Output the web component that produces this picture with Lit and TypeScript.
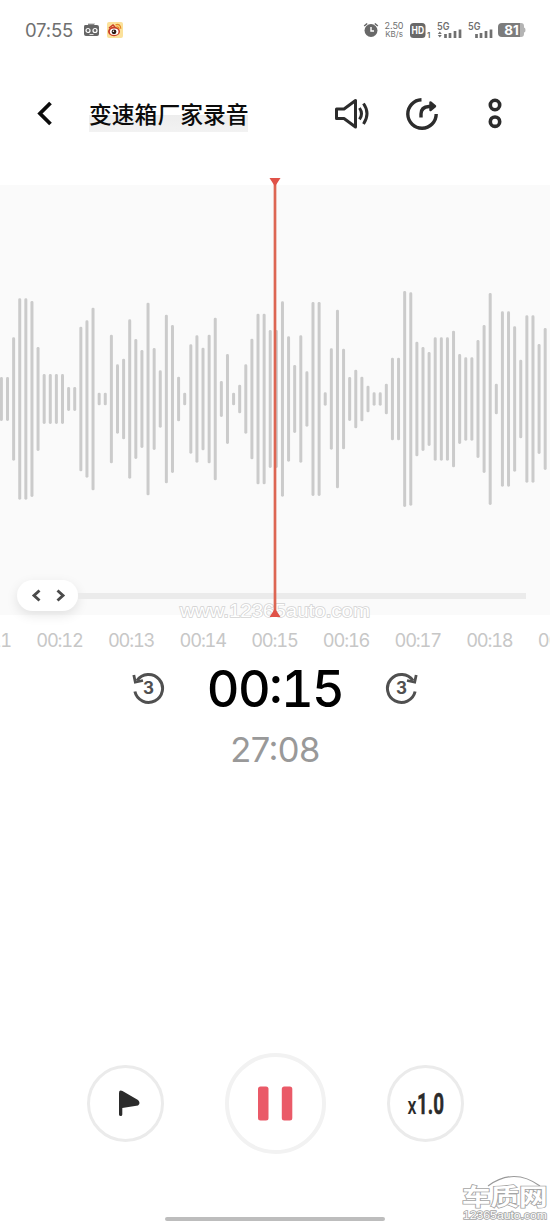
import { LitElement, html, svg, css } from "lit";
import { customElement } from "lit/decorators.js";

// Half-heights of the waveform bars, in thirds of a pixel.
const LEVELS = [
  66, 66, 185, 302, 302, 294, 156, 75, 75, 75, 75, 36, 36, 217, 236, 274, 19, 19, 193, 104,
  121, 239, 180, 147, 289, 153, 86, 253, 222, 67, 19, 164, 191, 154, 193, 244, 54, 135, 19, 43,
  104, 181, 256, 256, 207, 207, 293, 188, 102, 191, 83, 291, 291, 20, 152, 268, 151, 66, 88, 67,
  40, 20, 20, 46, 124, 124, 324, 320, 172, 156, 141, 185, 185, 185, 205, 135, 125, 125, 177, 222,
  318, 46, 263, 263, 218, 118, 251, 251, 165, 213,
];
const TICKS = ["00:11", "00:12", "00:13", "00:14", "00:15", "00:16", "00:17", "00:18", "00:19"];

@customElement("status-bar")
class StatusBar extends LitElement {
  static styles = css`
    :host { display: flex; height: 60px; box-sizing: border-box; padding: 0 24px 0 25px; justify-content: space-between; align-items: center; color: #707070; font-family: Inter, sans-serif; }
    svg { display: block; }
    .left { display: flex; align-items: center; }
    .time { width: 58px; font-size: 18.500px; letter-spacing: -0.200px; white-space: nowrap; }
    .tape { margin-right: 7px; }
    .right { display: flex; align-items: center; }
    .rate { margin-left: 5px; width: 20px; font-size: 9px; line-height: 8.500px; text-align: center; white-space: nowrap; }
    .unit { font-size: 8px; }
    .hd { margin-left: 6px; }
    .sig { margin-left: 6px; }
    .bat { margin-left: 5px; }
  `;
  render() {
    return html`
      <div class="left">
        <span class="time">07:55</span>
        <svg class="tape" width="17" height="16" viewBox="0 0 17 16">
          <path d="M2 3h3V2h6v1h3q2 0 2 2v7q0 2-2 2H3q-2 0-2-2V5q0-2 1-2z" fill="#656565"/>
          <path d="M5 2h7" stroke="#aaa"/>
          <circle cx="5" cy="8.500" r="2" fill="#656565" stroke="#fff" stroke-width="1.200"/>
          <circle cx="12" cy="8.500" r="2" fill="#656565" stroke="#fff" stroke-width="1.200"/>
          <path d="M6.500 12.500h4" stroke="#ddd"/>
        </svg>
        <svg width="16" height="16" viewBox="0 0 16 16">
          <rect width="16" height="16" rx="2" fill="#fbe19a"/>
          <ellipse cx="7" cy="9.500" rx="6" ry="4.700" fill="#c93d27"/>
          <ellipse cx="7.200" cy="9.800" rx="4.300" ry="3.200" fill="#fff"/>
          <circle cx="7" cy="9.800" r="2.400" fill="#2b1714"/>
          <circle cx="6.400" cy="9.200" r=".8" fill="#fff"/>
          <path d="M8.500 2.800q5-1.500 5.300 4M9.500 5q2.400-.4 2.500 2" fill="none" stroke="#e68a24" stroke-width="1.300"/>
          <path d="M2 6l4-3 2 2" fill="none" stroke="#c93d27" stroke-width="1.500"/>
        </svg>
      </div>
      <div class="right">
        <svg width="16" height="16" viewBox="0 0 16 16">
          <circle cx="8" cy="8.500" r="6.500" fill="#686868"/>
          <path d="M1.200 4l3-2.500M14.800 4l-3-2.500" stroke="#686868" stroke-width="1.600"/>
          <path d="M8 5v4h3" fill="none" stroke="#fff" stroke-width="1.400"/>
        </svg>
        <div class="rate"><div>2.50</div><div class="unit">KB/s</div></div>
        <svg class="hd" width="21" height="17" viewBox="0 0 21 17">
          <rect x="0" y="1" width="15.500" height="15" rx="3.500" fill="#686868"/>
          <text x="7.800" y="12.300" text-anchor="middle" textLength="12.500" lengthAdjust="spacingAndGlyphs" font-size="10.500" font-weight="700" fill="#fff">HD</text>
          <text x="17" y="16" font-size="8" font-weight="600" fill="#686868">1</text>
        </svg>
        <svg class="sig" width="25" height="19" viewBox="0 0 25 19">
          <text x="0" y="9.200" font-size="10" font-weight="600" textLength="12.500" lengthAdjust="spacingAndGlyphs" fill="#707070">5G</text>
          <path d="M.8 13h4L2.800 10.500zM.8 14h4l-2 2.500z" fill="#707070"/>
          <path d="M8.500 17v-4M13 17v-5M18 17v-7M23 17V8.500" stroke="#707070" stroke-width="2.700"/>
        </svg>
        <svg class="sig" width="25" height="19" viewBox="0 0 25 19">
          <text x="0" y="9.200" font-size="10" font-weight="600" textLength="12.500" lengthAdjust="spacingAndGlyphs" fill="#707070">5G</text>
          <path d="M8.500 17v-4M13 17v-5M18 17v-7M23 17V8.500" stroke="#707070" stroke-width="2.700"/>
        </svg>
        <svg class="bat" width="28" height="14" viewBox="0 0 28 14">
          <path d="M20 0h3q3 0 3 3v1.500q1.500 0 1.500 2.500t-1.500 2.500V11q0 3-3 3h-3z" fill="#b4b4b4"/>
          <path d="M4 0h18v14H4q-4 0-4-4V4q0-4 4-4z" fill="#7c7c7c"/>
          <text x="13.500" y="11.800" text-anchor="middle" font-size="13.500" font-weight="700" fill="#fff">81</text>
        </svg>
      </div>
    `;
  }
}

@customElement("title-bar")
class TitleBar extends LitElement {
  static styles = css`
    :host { display: flex; height: 108px; box-sizing: border-box; padding: 0 46px 0 34px; align-items: center; font-family: "Noto Sans CJK SC", sans-serif; }
    svg { display: block; flex: none; }
    .title { margin: 2px auto 0 33px; height: 34px; width: 159px; font-size: 22.800px; line-height: 32px; font-weight: 500; white-space: nowrap; color: #0b0b0b; background: linear-gradient(transparent 17px, #ededed 17px, #f2f2f2 34px); }
    .sound { margin-right: 35px; }
    .share { margin-right: 47px; }
  `;
  render() {
    return html`
      <svg width="22" height="30" viewBox="0 0 22 30"><path d="M16.500 4L6 14.500 16.500 25" fill="none" stroke="#0c0c0c" stroke-width="3.800"/></svg>
      <div class="title">变速箱厂家录音</div>
      <svg class="sound" width="36" height="34" viewBox="0 0 36 34" fill="none" stroke="#2c2c2c" stroke-width="3" stroke-linejoin="round">
        <path d="M2.500 12h7.500L21.500 3.500v26.500L10 21.500H2.500z"/>
        <path d="M25.500 11q4 5.700 0 11.400M29.500 6.500q7 10 0 20.500" stroke-width="3"/>
      </svg>
      <svg class="share" width="34" height="34" viewBox="0 0 34 34" fill="none" stroke="#2c2c2c" stroke-width="3.400">
        <path d="M16.500 2.800A14.200 14.200 0 1 0 31.200 17"/>
        <path d="M16 20.500V17q0-7 8-7.500h2"/>
        <path d="M25.500 5.500L30 9.300 25.500 13z" fill="#2c2c2c" stroke-width="2.500" stroke-linejoin="round"/>
      </svg>
      <svg width="18" height="32" viewBox="0 0 18 32" fill="none" stroke="#2c2c2c" stroke-width="3.600">
        <circle cx="9" cy="7" r="4.700"/><circle cx="9" cy="23.700" r="4.700"/>
      </svg>
    `;
  }
}

@customElement("wave-view")
class WaveView extends LitElement {
  static styles = css`
    :host { display: block; font-family: Inter, sans-serif; }
    .stage { display: grid; margin-top: 10px; height: 450px; }
    .wave, .slider, .cursor, .mark { grid-area: 1 / 1; display: block; }
    .wave { margin-top: 7px; height: 430px; width: 550px; background: #fafafa; }
    .slider { align-self: start; margin: 402px 24px 0 17px; display: flex; align-items: center; }
    .pill { display: block; width: 61px; height: 31px; border-radius: 16px; background: #fff; box-shadow: 0 4px 12px rgba(0, 0, 0, 0.1); }
    .track { flex: 1; height: 6px; background: #ebebeb; }
    .cursor { justify-self: center; z-index: 1; }
    .mark { justify-self: center; margin-top: 422px; }
    .ticks { display: grid; grid-template-columns: repeat(9, 71.650px); margin: 0 -48px 0 -48px; text-align: center; font-size: 18.300px; font-variant-numeric: tabular-nums; line-height: 28px; letter-spacing: -1.200px; color: #c7c7c7; }
    .clip { overflow: hidden; margin: -2px 0 -1px; }
  `;
  render() {
    return html`
      <div class="stage">
        <svg class="wave" viewBox="0 0 550 430">
          ${LEVELS.map((v, i) => svg`<rect x=${-0.1 + i * 6.11} y=${214 - v / 3} width="3" height=${(2 * v) / 3} rx="1.4" fill="#cbcbcb"/>`)}
        </svg>
        <div class="slider">
          <svg class="pill" viewBox="0 0 61 31"><path d="M22.500 10.500L17 15.500l5.500 5M40.500 10.500l5.500 5-5.500 5" fill="none" stroke="#4b4b4b" stroke-width="2.900"/></svg>
          <div class="track"></div>
        </div>
        <svg class="mark" width="196" height="24" viewBox="0 0 196 24" font-family="Liberation Sans, sans-serif">
          <text x="3" y="17" font-size="18" textLength="190" lengthAdjust="spacingAndGlyphs" fill="#fff" stroke="#d2d2d2" stroke-width="1.400" paint-order="stroke">www.12365auto.com</text>
        </svg>
        <svg class="cursor" width="14" height="440" viewBox="0 0 14 440">
          <path d="M7 2v434" stroke="#dd6653" stroke-width="2.700"/>
          <path d="M1.500 0h11L7 8.500zM1.500 439h11L7 430.500z" fill="#e05248"/>
        </svg>
      </div>
      <div class="clip"><div class="ticks">${TICKS.map((t) => html`<span>${t}</span>`)}</div></div>
    `;
  }
}

@customElement("play-time")
class PlayTime extends LitElement {
  static styles = css`
    :host { display: block; text-align: center; font-family: Inter, sans-serif; }
    .row { display: flex; justify-content: center; align-items: center; height: 72px; margin-top: -1px; }
    .now { width: 220px; font-size: 50.500px; font-weight: 500; letter-spacing: -1.600px; color: #000; white-space: nowrap; font-variant-numeric: tabular-nums; }
    .total { font-size: 34.500px; line-height: 50px; letter-spacing: -0.600px; color: #999; padding-top: 1px; }
    .colon { position: relative; top: -0.070em; }
  `;
  render() {
    return html`
      <div class="row">
        <svg width="34" height="34" viewBox="0 0 34 34" fill="none" stroke="#505050" stroke-width="3">
          <path d="M3.900 20.500A14 14 0 1 0 6 9.500"/><path d="M2.800 4l1.500 7.200 7.700-1.700" stroke-width="2.800"/>
          <text x="17.500" y="23" text-anchor="middle" font-size="17" font-weight="700" fill="#505050" stroke="none">3</text>
        </svg>
        <div class="now">00<span class="colon">:</span>15</div>
        <svg width="34" height="34" viewBox="0 0 34 34" fill="none" stroke="#505050" stroke-width="3">
          <path d="M30.100 20.500A14 14 0 1 1 28 9.500"/><path d="M31.200 4l-1.500 7.200-7.700-1.700" stroke-width="2.800"/>
          <text x="16.500" y="23" text-anchor="middle" font-size="17" font-weight="700" fill="#505050" stroke="none">3</text>
        </svg>
      </div>
      <div class="total">27<span class="colon">:</span>08</div>
    `;
  }
}

@customElement("play-controls")
class PlayControls extends LitElement {
  static styles = css`
    :host { display: flex; justify-content: center; align-items: center; gap: 61px; height: 102px; font-family: Roboto, sans-serif; }
    .btn { box-sizing: border-box; width: 77px; height: 77px; border: 3px solid #ebebeb; border-radius: 50%; display: grid; place-items: center; }
    .main { width: 101px; height: 101px; border: 4px solid #f2f2f2; }
    svg { display: block; }
  `;
  render() {
    return html`
      <div class="btn"><svg width="71" height="71" viewBox="0 0 71 71">
        <path d="M29 25q0-3.500 3.500-2L48 32q3 3 0 5.500L32.300 40v6.500q0 1.500-1.600 1.500T29 46.500z" fill="#2b2b2b"/>
      </svg></div>
      <div class="btn main"><svg width="37" height="37" viewBox="0 0 37 37" fill="#ea5a68">
        <rect x="1" y="1.500" width="10.500" height="34" rx="2.500"/><rect x="24.800" y="1.500" width="10.500" height="34" rx="2.500"/>
      </svg></div>
      <div class="btn"><svg width="71" height="71" viewBox="0 0 71 71" fill="#2b2b2b" stroke="#2b2b2b">
        <text x="17.500" y="46" font-size="24" font-weight="500" textLength="9" lengthAdjust="spacingAndGlyphs" stroke="none">x</text>
        <text x="27" y="46" font-size="30" font-weight="700" textLength="27" lengthAdjust="spacingAndGlyphs" stroke-width=".5">1.0</text>
      </svg></div>
    `;
  }
}

@customElement("app-root")
class AppRoot extends LitElement {
  static styles = css`
    :host { display: flex; flex-direction: column; position: relative; width: 550px; height: 1222px; overflow: hidden; background: #fff; }
    .controls { margin-top: 277px; }
    .home { width: 220px; height: 4px; border-radius: 2px; background: #bdbdbd; margin: 63px auto 0; }
    .logo { position: absolute; left: 460px; top: 1172px; }
  `;
  render() {
    return html`
      <status-bar></status-bar>
      <title-bar></title-bar>
      <wave-view></wave-view>
      <play-time></play-time>
      <play-controls class="controls"></play-controls>
      <div class="home"></div>
      <svg class="logo" width="90" height="50" viewBox="0 0 90 50" fill="#fff" stroke-width="1.500" paint-order="stroke">
        <path d="M28 14Q54-5 80 14" fill="none" stroke="#999" stroke-width="1.200"/>
        <text transform="translate(2 32.500) scale(1.270 1)" font-size="22.500" font-weight="700" font-family="Noto Sans CJK SC, sans-serif" stroke="#a4a4a4">车质网</text>
        <text x="3" y="46.500" font-size="11" textLength="84" lengthAdjust="spacingAndGlyphs" font-family="Liberation Sans, sans-serif" stroke="#a4a4a4">12365auto.com</text>
      </svg>
    `;
  }
}
